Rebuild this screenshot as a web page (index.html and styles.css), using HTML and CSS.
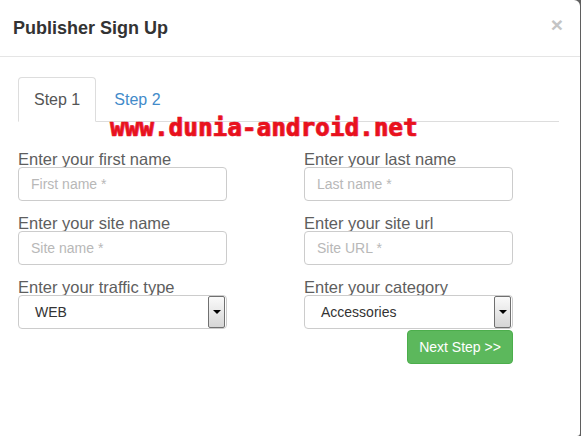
FILE: index.html
```html
<!DOCTYPE html>
<html lang="en">

<head>
    <meta charset="UTF-8">
    <title>Publisher Sign Up</title>
    <link rel="stylesheet" href="styles.css">
</head>

<body>
    <div class="modal">
        <!-- header -->
        <div class="modal-header">
            <h4 class="modal-title">Publisher Sign Up</h4>
            <span class="close">&times;</span>
        </div>

        <div class="modal-body">
            <ul class="nav-tabs">
                <li class="active"><a>Step 1</a></li>
                <li><a>Step 2</a></li>
            </ul>

            <div class="watermark">www.dunia-android.net</div>

            <form class="form-grid">
                <div class="field">
                    <label>Enter your first name</label>
                    <input type="text" placeholder="First name *">
                </div>
                <div class="field">
                    <label>Enter your last name</label>
                    <input type="text" placeholder="Last name *">
                </div>
                <div class="field">
                    <label>Enter your site name</label>
                    <input type="text" placeholder="Site name *">
                </div>
                <div class="field">
                    <label>Enter your site url</label>
                    <input type="text" placeholder="Site URL *">
                </div>
                <div class="field">
                    <label>Enter your traffic type</label>
                    <div class="select">
                        <span class="select-value">WEB</span>
                        <span class="select-arrow"></span>
                    </div>
                </div>
                <div class="field">
                    <label>Enter your category</label>
                    <div class="select">
                        <span class="select-value">Accessories</span>
                        <span class="select-arrow"></span>
                    </div>
                    <div class="actions">
                        <button type="button" class="btn-next">Next Step &gt;&gt;</button>
                    </div>
                </div>
            </form>
        </div>
    </div>
</body>

</html>
```

FILE: styles.css
```css
body {
    margin: 0;
    padding: 0;
    background-color: #5f5f5f;
    font-family: Arial, "Liberation Sans", sans-serif;
    color: #333;
}

.modal {
    width: 580px;
    height: 436px;
    background-color: #fff;
    border-top-right-radius: 6px;
    border-bottom-right-radius: 3px;
    position: relative;
}

.modal-header {
    padding: 15px 13px;
    border-bottom: 1px solid #e5e5e5;
    display: flex;
    justify-content: space-between;
    align-items: flex-start;
}

.modal-title {
    margin: 0;
    font-size: 18px;
    font-weight: bold;
    line-height: 26px;
    color: #333;
}

.close {
    font-size: 21px;
    font-weight: bold;
    line-height: 20px;
    color: #c4c4c4;
    margin-right: 4px;
}

.modal-body {
    padding: 20px 21px 0 18px;
    position: relative;
}

.nav-tabs {
    list-style: none;
    margin: 0;
    padding: 0;
    display: flex;
    border-bottom: 1px solid #ddd;
}

.nav-tabs li {
    margin-right: 2px;
    margin-bottom: -1px;
}

.nav-tabs a {
    display: block;
    padding: 10px 15px;
    font-size: 16px;
    line-height: 23px;
    color: #428bca;
    border: 1px solid transparent;
    border-radius: 4px 4px 0 0;
}

.nav-tabs .active a {
    color: #555;
    background-color: #fff;
    border-color: #ddd #ddd transparent;
}

.watermark {
    position: absolute;
    left: 110px;
    top: 57px;
    font-family: "DejaVu Sans Mono", monospace;
    font-size: 24px;
    font-weight: bold;
    color: #e8121c;
    -webkit-text-stroke: 0.6px #e8121c;
    text-shadow: 1px 0 0 #f06aa0;
    letter-spacing: 0.2px;
}

.form-grid {
    display: grid;
    grid-template-columns: 209px 209px;
    column-gap: 77px;
    padding-top: 26px;
}

.field {
    display: flex;
    flex-direction: column;
    margin-bottom: 11px;
}

.field label {
    font-size: 16.5px;
    line-height: 15px;
    margin-top: 4px;
    color: #5e5e5e;
}

.field input {
    box-sizing: border-box;
    height: 34px;
    padding: 6px 12px;
    font-family: Arial, "Liberation Sans", sans-serif;
    font-size: 14px;
    color: #555;
    border: 1px solid #ccc;
    border-radius: 4px;
    outline: none;
}

.field input::placeholder {
    color: #b8b8b8;
}

.select {
    box-sizing: border-box;
    height: 34px;
    display: flex;
    align-items: center;
    justify-content: space-between;
    border: 1px solid #ccc;
    border-radius: 4px;
    padding: 1px 1px 1px 16px;
    font-size: 14px;
    color: #333;
}

.select-arrow {
    width: 15px;
    height: 30px;
    border: 1px solid #707070;
    border-radius: 2px;
    background: linear-gradient(#fafafa, #d6d6d6);
    position: relative;
}

.select-arrow::after {
    content: "";
    position: absolute;
    left: 4px;
    top: 13px;
    border-left: 4px solid transparent;
    border-right: 4px solid transparent;
    border-top: 4px solid #000;
}

.actions {
    display: flex;
    justify-content: flex-end;
    margin-top: 1px;
}

.btn-next {
    width: 106px;
    height: 34px;
    background-color: #5cb85c;
    border: 1px solid #4cae4c;
    border-radius: 4px;
    color: #fff;
    font-family: Arial, "Liberation Sans", sans-serif;
    font-size: 14px;
}
```
